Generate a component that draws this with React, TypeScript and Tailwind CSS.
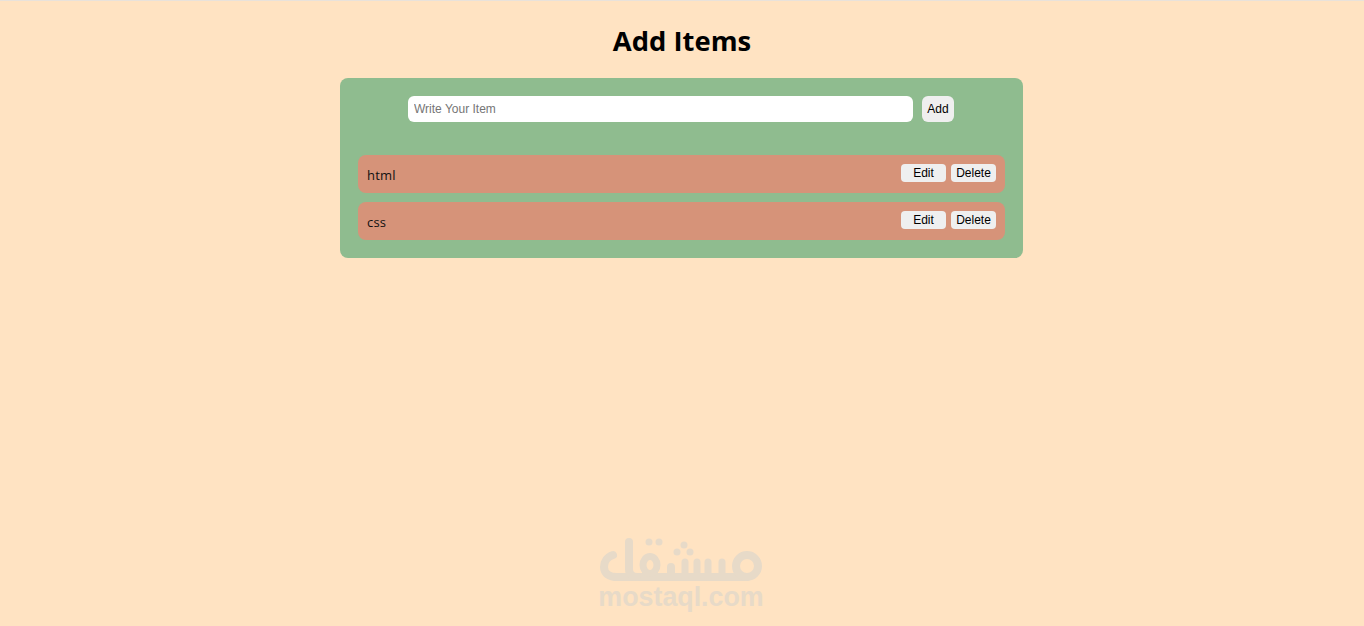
function Item({ name }: { name: string }) {
  return (
    <li className="h-[38px] rounded-lg bg-[#d69379] px-[9px] flex items-center justify-between">
      <span className="text-[13px] tracking-[0.2px] text-[#111] font-['Open_Sans',sans-serif] mt-[4px]">{name}</span>
      <div className="flex gap-[5px] -mt-[2px]">
        <button className="w-[45px] h-[18px] rounded-[4px] bg-[#efefef] text-[12px] leading-none text-black">Edit</button>
        <button className="w-[45px] h-[18px] rounded-[4px] bg-[#efefef] text-[12px] leading-none text-black">Delete</button>
      </div>
    </li>
  );
}

function MostaqlLogo() {
  return (
    <svg width="166" height="48" viewBox="0 0 166 48" fill="none" stroke="#e7dac8" strokeWidth="8" strokeLinecap="round" strokeLinejoin="round">
      {/* lam bowl and baseline */}
      <path d="M14 18C8 20 5 25 5 30C5 37 11 40 18 40H148" />
      <path d="M30 5V32C30 37 33 40 38 40" />
      {/* qaf */}
      <ellipse cx="51" cy="28" rx="7" ry="8.5" strokeWidth="7" />
      <path d="M72 40V30" />
      {/* shin teeth */}
      <path d="M86 40V25M98 40V25M109 40V25M123 40V25" strokeWidth="7" />
      {/* meem */}
      <circle cx="148" cy="29" r="11" />
      <g fill="#e7dac8" stroke="none">
        <circle cx="50" cy="5" r="3.5" />
        <circle cx="60" cy="5" r="3.5" />
        <circle cx="78" cy="15" r="3.5" />
        <circle cx="91" cy="15" r="3.5" />
        <circle cx="85" cy="8" r="3.5" />
      </g>
    </svg>
  );
}

export default function App() {
  return (
    <div className="relative min-h-[626px] bg-[#ffe3c2] border-t border-[#e9e2da] font-['Liberation_Sans',Arial,sans-serif] overflow-hidden">
      <h1 className="pt-[21px] text-center text-[27.4px] leading-[38px] font-bold text-black font-['Open_Sans',sans-serif]">Add Items</h1>
      <main className="ml-[340px] mt-[18px] w-[683px] rounded-lg bg-[#8fbc8f] p-[18px]">
        <div className="flex justify-center gap-[9px] pr-[1px]">
          <input
            placeholder="Write Your Item"
            className="w-[505px] h-[26px] rounded-[6px] bg-white px-[6px] text-[12px] placeholder:text-[#757575] outline-none"
          />
          <button className="w-[32px] h-[26px] rounded-[6px] bg-[#efefef] text-[12px] text-black">Add</button>
        </div>
        <ul className="mt-[33px] flex flex-col gap-[9px]">
          <Item name="html" />
          <Item name="css" />
        </ul>
      </main>
      {/* watermark */}
      <div className="absolute left-[599px] top-[536px] w-[166px] flex flex-col items-center">
        <MostaqlLogo />
        <span className="text-[26.8px] leading-[26px] -mt-[1px] mr-[2px] font-bold text-[#e7dac8]">mostaql.com</span>
      </div>
    </div>
  );
}
